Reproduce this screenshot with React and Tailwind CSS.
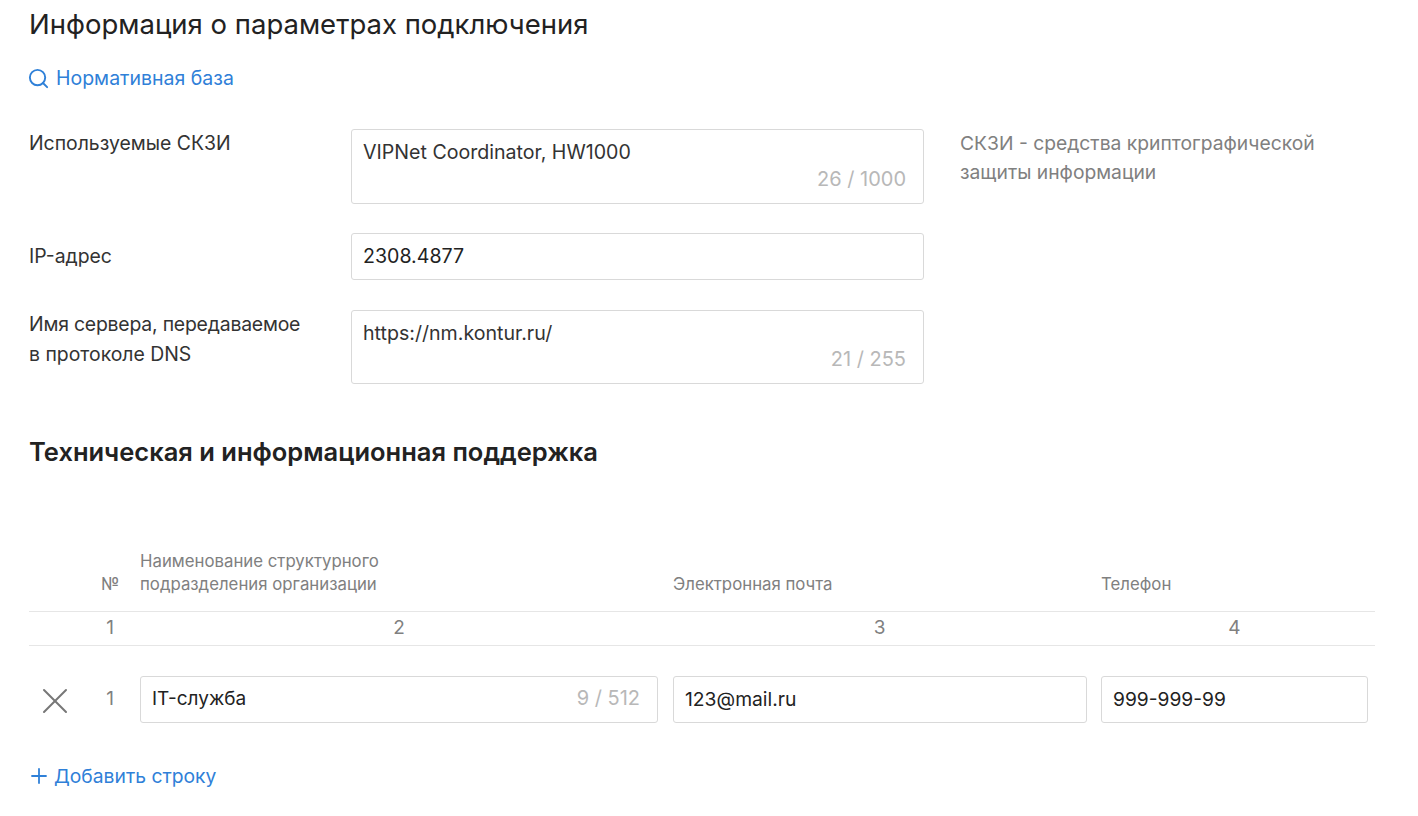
import React from 'react';
import { Search, Plus, X } from 'lucide-react';

const font = 'font-["Inter","Noto_Sans",sans-serif]';

const Field = ({ label, value, counter, hint, height }) => (
  <div className="flex items-start">
    <div className="-mt-[1px] w-[322px] shrink-0 pr-8 text-[19.4px] leading-[30px] text-[#333]">{label}</div>
    <div className={`relative w-[573px] shrink-0 rounded-[3px] border border-[#d9d9d9] bg-white px-[11px] pt-[8px] text-[19.6px] text-[#333] ${height}`}>
      <div className="leading-[28px]">{value}</div>
      {counter && <div className="absolute bottom-[11px] right-[17px] text-[20px] leading-[26px] text-[#b8b8b8]">{counter}</div>}
    </div>
    {hint && <div className="ml-[36px] w-[380px] text-[19.3px] leading-[29px] text-[#808080]">{hint}</div>}
  </div>
);

const Input = ({ value, counter, size }) => (
  <div className={`flex h-[47px] items-center justify-between rounded-[3px] border border-[#d9d9d9] bg-white px-[11px] text-[#222] ${size}`}>
    <span>{value}</span>
    {counter && <span className="pr-[6px] pb-[3px] text-[20px] text-[#b8b8b8]">{counter}</span>}
  </div>
);

export default function App() {
  const cols = 'grid grid-cols-[58px_46px_532px_429px_281px]';
  return (
    <div className={`min-h-screen bg-white pl-[29px] ${font}`}>
      <h1 className="pt-[6px] text-[27.5px] font-normal leading-[36px] text-[#222]">Информация о параметрах подключения</h1>

      <a className="mt-[23px] flex items-center gap-[6px] text-[19.5px] leading-[26px] text-[#2f80d8]">
        <Search className="-ml-[2px] h-[23px] w-[23px]" strokeWidth={2} />
        Нормативная база
      </a>

      <div className="mt-[38px] flex flex-col gap-[29px]">
        <Field
          label="Используемые СКЗИ"
          value="VIPNet Coordinator, HW1000"
          counter="26 / 1000"
          height="h-[75px]"
          hint="СКЗИ - средства криптографической защиты информации"
        />
        <div className="flex items-center">
          <div className="w-[322px] shrink-0 text-[19.4px] text-[#333]">IP-адрес</div>
          <div className="w-[573px]"><Input value="2308.4877" size="text-[19.6px]" /></div>
        </div>
        <div className="mt-[1px]">
          <Field
            label={<><span className="tracking-[-0.2px]">Имя сервера, передаваемое</span><br />в протоколе DNS</>}
            value="https://nm.kontur.ru/"
            counter="21 / 255"
            height="h-[74px]"
          />
        </div>
      </div>

      <h2 className="mt-[52px] text-[25.5px] font-semibold leading-[32px] text-[#222]">Техническая и информационная поддержка</h2>

      <div className="mt-[82px] w-[1346px]">
        <div className={`${cols} items-end border-b border-[#e6e6e6] pb-[15px] text-[16.8px] leading-[23px] text-[#808080]`}>
          <div />
          <div className="pl-[14px]">№</div>
          <div className="pl-[7px]">Наименование структурного<br />подразделения организации</div>
          <div className="pl-[8px]">Электронная почта</div>
          <div className="pl-[7px]">Телефон</div>
        </div>
        <div className={`${cols} h-[34px] items-center border-b border-[#e6e6e6] text-center text-[19px] text-[#808080]`}>
          <div />
          <div>1</div>
          <div>2</div>
          <div>3</div>
          <div>4</div>
        </div>
        <div className={`${cols} mt-[30px] items-center`}>
          <div className="pl-[4px]">
            <X className="-mb-[3px] block h-[44px] w-[44px] text-[#777]" strokeWidth={1.1} />
          </div>
          <div className="text-center text-[19px] text-[#808080]">1</div>
          <div className="pl-[7px] pr-[7px]"><Input value="IT-служба" counter="9 / 512" size="text-[19px]" /></div>
          <div className="pl-[8px] pr-[7px]"><Input value="123@mail.ru" size="text-[19.3px]" /></div>
          <div className="pl-[7px] pr-[7px]"><Input value="999-999-99" size="text-[19.2px]" /></div>
        </div>
      </div>

      <a className="mt-[40px] flex items-center gap-[3px] text-[19.3px] leading-[26px] text-[#2f80d8]">
        <Plus className="-ml-[2px] h-6 w-6" strokeWidth={1.8} />
        Добавить строку
      </a>
    </div>
  );
}
